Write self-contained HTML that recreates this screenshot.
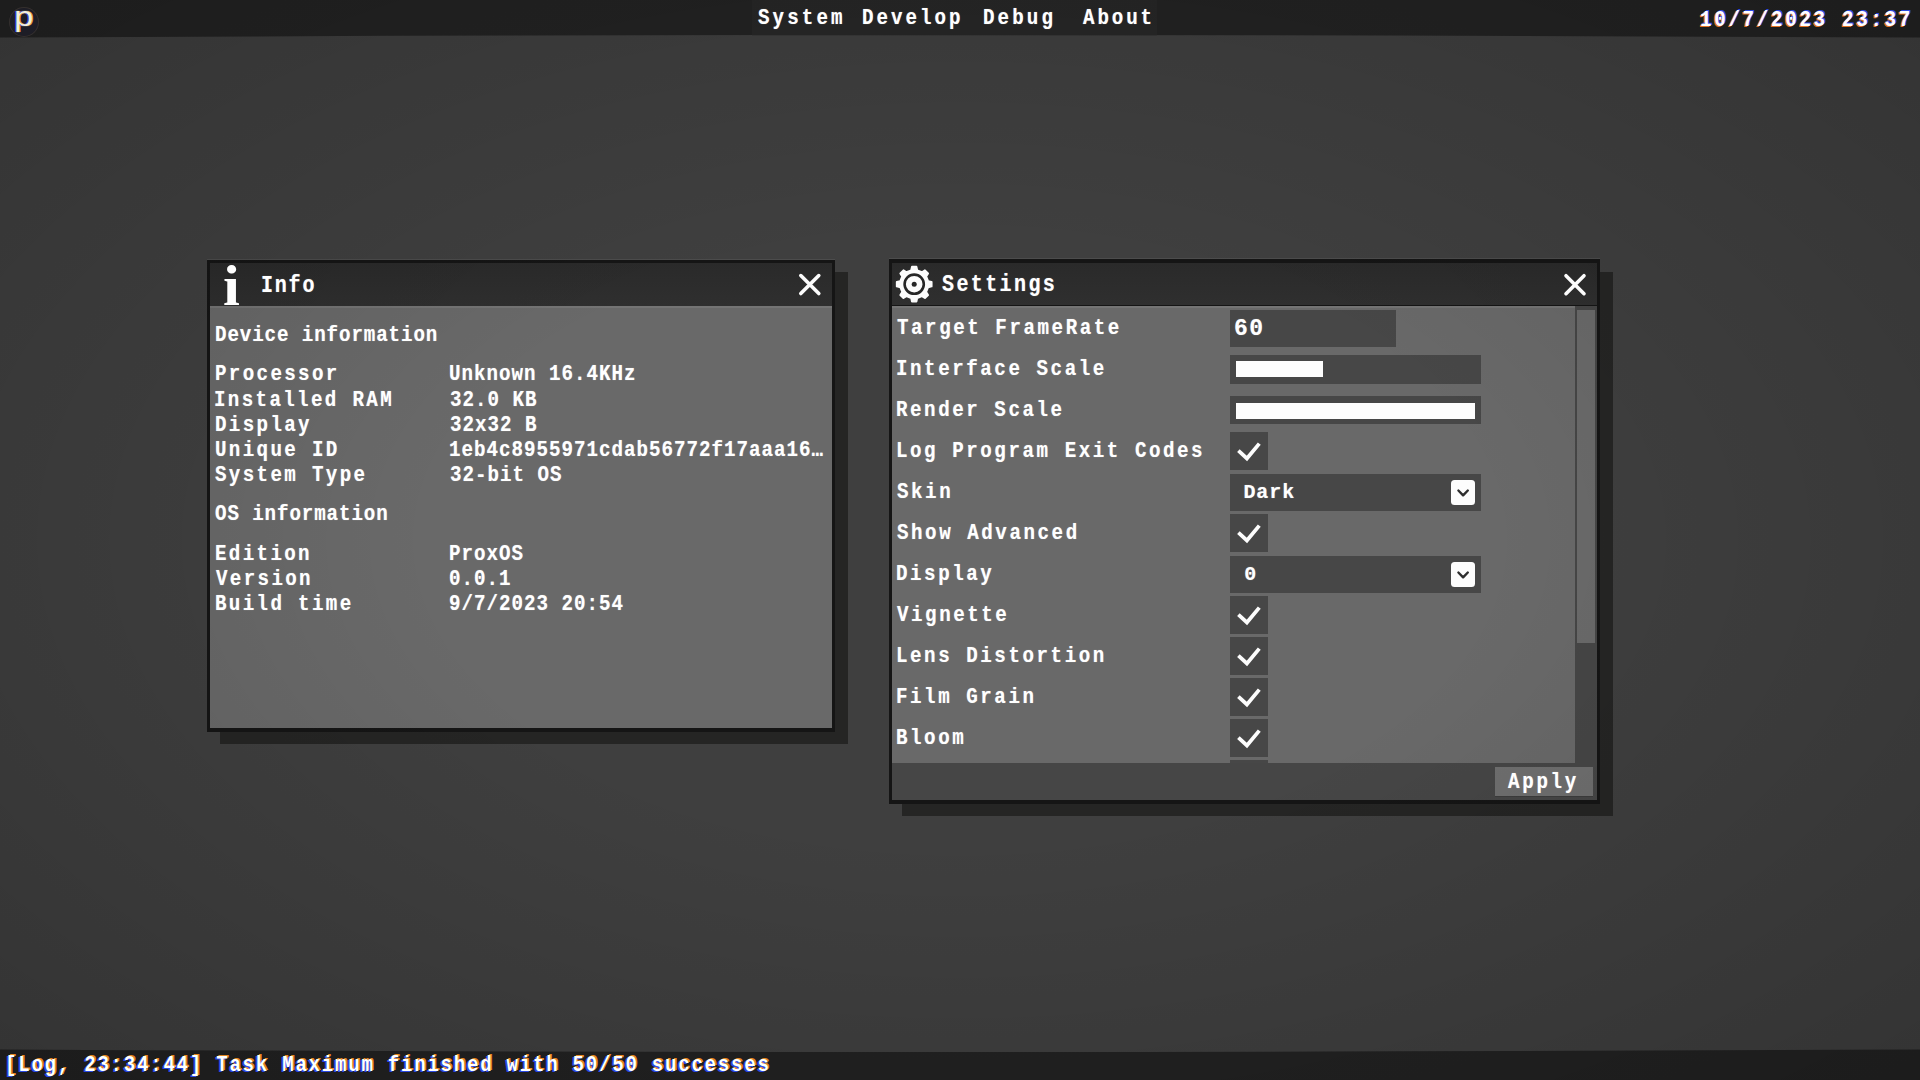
<!DOCTYPE html>
<html lang="en">
<head>
<meta charset="utf-8">
<title>ProxOS</title>
<style>
*{box-sizing:border-box;margin:0;padding:0}
html,body{width:1920px;height:1080px;overflow:hidden;background:#404040}
body{position:relative;font-family:"Liberation Mono","DejaVu Sans Mono",monospace;font-weight:bold;font-size:22px;color:#fff;line-height:26px;white-space:pre}
.abs{position:absolute}
#desk{left:0;top:0;width:1920px;height:1080px;background:#3f3f3f}
.t{position:absolute;height:26px;line-height:26px;transform:scaleX(0.87);transform-origin:0 0;text-shadow:0 0 1px rgba(255,255,255,.5)}
.ca1{text-shadow:1.7px -.7px 0 rgba(45,80,255,.9),-1.7px .7px 0 rgba(255,125,35,.9)}
.ca2{text-shadow:-1.7px .7px 0 rgba(45,80,255,.9),1.7px -.7px 0 rgba(255,150,35,.9)}
.win{position:absolute;background:#151515;box-shadow:0 -1px 0 #4c4c4c}
.shadow{position:absolute;background:#252524}
.title{position:absolute;left:3.4px;top:3.6px;right:3.4px;height:42.6px;background:linear-gradient(#2a2a2a,#2f2f2f)}
.body{position:absolute;background:#696969}
.ctl{position:absolute;background:#474747}
.fill{position:absolute;background:#fdfdfd}
.ddb{position:absolute;background:#fdfdfd;border-radius:3.5px;width:24px;height:24.6px}
.logo{left:14px;top:1px;font:normal 28.1px/32px "Liberation Sans","DejaVu Sans",sans-serif;letter-spacing:0;color:#f1eddc;transform:scaleX(1.24);transform-origin:0 0;text-shadow:-.8px -.3px 0 #2a35d8,.8px .4px 0 #e8932a,0 0 1px #f1eddc}
.iicon{left:223.4px;top:254.1px;font:bold 56.2px/64px "Liberation Serif","DejaVu Serif",serif;letter-spacing:0;color:#fff;transform:scaleX(1.08);transform-origin:0 0}
svg{position:absolute;overflow:visible}
#vig{left:0;top:0;width:1920px;height:1080px;pointer-events:none;background:radial-gradient(ellipse 72% 72% at 50% 50%,rgba(0,0,0,0) 38%,rgba(0,0,0,.19) 100%)}
</style>
</head>
<body>
<div id="desk" class="abs"></div>

<!-- top + bottom bars (slightly curved by lens distortion) -->
<svg class="abs" style="left:0;top:0" width="1920" height="1080" viewBox="0 0 1920 1080">
  <path d="M0 0H1920V37.6Q960 32.4 0 37.6Z" fill="#232323"/>
  <path d="M752 0H1157V35.2H752Z" fill="#272727"/>
  <path d="M0 1080H1920V1049.4Q960 1054.6 0 1049.4Z" fill="#222222"/>
</svg>

<!-- INFO WINDOW -->
<div class="shadow" style="left:219.6px;top:272px;width:628px;height:471.8px"></div>
<div class="win" id="info" style="left:207px;top:259.6px;width:628px;height:472px">
  <div class="title"></div>
  <div class="body" style="left:3.2px;top:46.6px;right:3.2px;bottom:3.6px;border-top:2px solid #747474"></div>
</div>

<!-- SETTINGS WINDOW -->
<div class="shadow" style="left:902px;top:272px;width:710.6px;height:544px"></div>
<div class="win" id="settings" style="left:889px;top:259px;width:711.2px;height:544.6px">
  <div class="title"></div>
  <div class="body" style="left:3.2px;top:47px;right:3.4px;bottom:3.4px;background:#464646"></div>
  <div class="body" style="left:3.2px;top:47px;width:682.6px;height:457px;border-top:2px solid #747474"></div>
  <div class="body" style="left:688.4px;top:51px;width:17.6px;height:332.6px;background:#6a6a6a"></div>
  <div class="body" style="left:606px;top:508px;width:97.6px;height:29.4px;background:#6f6f6f;box-shadow:0 1px 0 #3c3c3c"></div>
</div>
<div class="ctl" style="left:1229.5px;top:309.9px;width:166.5px;height:37.5px"></div>
<div class="ctl" style="left:1229.5px;top:355.4px;width:251.5px;height:28.5px"></div>
<div class="ctl" style="left:1229.5px;top:396.3px;width:251.5px;height:27.8px"></div>
<div class="ctl" style="left:1229.5px;top:432px;width:38.4px;height:38.4px"></div>
<div class="ctl" style="left:1229.5px;top:514px;width:38.4px;height:38.4px"></div>
<div class="ctl" style="left:1229.5px;top:596px;width:38.4px;height:38.4px"></div>
<div class="ctl" style="left:1229.5px;top:637px;width:38.4px;height:38.4px"></div>
<div class="ctl" style="left:1229.5px;top:678px;width:38.4px;height:38.4px"></div>
<div class="ctl" style="left:1229.5px;top:719px;width:38.4px;height:38.4px"></div>
<div class="ctl" style="left:1229.5px;top:473.9px;width:251.5px;height:37px"></div>
<div class="ctl" style="left:1229.5px;top:555.9px;width:251.5px;height:37px"></div>
<div class="ctl" style="left:1229.5px;top:760px;width:38.4px;height:3.2px"></div>

<!-- vignette (applies to backgrounds; glowing white elements sit above it) -->
<div id="vig" class="abs"></div>

<!-- logo: dark disc + letter -->
<div class="abs" style="left:9px;top:7px;width:30px;height:30px;border-radius:50%;background:#1d1d26;box-shadow:inset 0 0 0 1px #35302d"></div>
<div class="abs logo">p</div>

<!-- info icon -->
<div class="abs iicon">i</div>
<svg style="left:0;top:0" width="1920" height="1080"><path d="M800.8 275.6L818.8 293.6M818.8 275.6L800.8 293.6" stroke="#fcfcfc" stroke-width="3.6" stroke-linecap="round"/></svg>
<svg style="left:0;top:0" width="1920" height="1080"><path d="M911.24 270.31 L912.02 266.84 L916.38 266.84 L917.16 270.31 L921.93 272.29 L924.94 270.38 L928.02 273.46 L926.11 276.47 L928.09 281.24 L931.56 282.02 L931.56 286.38 L928.09 287.16 L926.11 291.93 L928.02 294.94 L924.94 298.02 L921.93 296.11 L917.16 298.09 L916.38 301.56 L912.02 301.56 L911.24 298.09 L906.47 296.11 L903.46 298.02 L900.38 294.94 L902.29 291.93 L900.31 287.16 L896.84 286.38 L896.84 282.02 L900.31 281.24 L902.29 276.47 L900.38 273.46 L903.46 270.38 L906.47 272.29Z" fill="#fcfcfc" stroke="#fcfcfc" stroke-width="2" stroke-linejoin="round"/><circle cx="914.2" cy="284.2" r="9.6" fill="none" stroke="#262626" stroke-width="2.6"/><circle cx="914.2" cy="284.2" r="2.5" fill="#262626"/></svg>
<svg style="left:0;top:0" width="1920" height="1080"><path d="M1566 275.7L1584 293.7M1584 275.7L1566 293.7" stroke="#fcfcfc" stroke-width="3.6" stroke-linecap="round"/></svg>
<div class="fill" style="left:1235.75px;top:361px;width:87.5px;height:16.3px"></div>
<div class="fill" style="left:1235.75px;top:402.5px;width:239.5px;height:16.4px"></div>
<svg style="left:1229.5px;top:432px" width="39" height="39" viewBox="0 0 39 39"><path d="M8.4 18.7L16.9 26.4L29.3 11.6" fill="none" stroke="#fdfdfd" stroke-width="3.8" stroke-linecap="butt" stroke-linejoin="miter"/></svg>
<svg style="left:1229.5px;top:514px" width="39" height="39" viewBox="0 0 39 39"><path d="M8.4 18.7L16.9 26.4L29.3 11.6" fill="none" stroke="#fdfdfd" stroke-width="3.8" stroke-linecap="butt" stroke-linejoin="miter"/></svg>
<svg style="left:1229.5px;top:596px" width="39" height="39" viewBox="0 0 39 39"><path d="M8.4 18.7L16.9 26.4L29.3 11.6" fill="none" stroke="#fdfdfd" stroke-width="3.8" stroke-linecap="butt" stroke-linejoin="miter"/></svg>
<svg style="left:1229.5px;top:637px" width="39" height="39" viewBox="0 0 39 39"><path d="M8.4 18.7L16.9 26.4L29.3 11.6" fill="none" stroke="#fdfdfd" stroke-width="3.8" stroke-linecap="butt" stroke-linejoin="miter"/></svg>
<svg style="left:1229.5px;top:678px" width="39" height="39" viewBox="0 0 39 39"><path d="M8.4 18.7L16.9 26.4L29.3 11.6" fill="none" stroke="#fdfdfd" stroke-width="3.8" stroke-linecap="butt" stroke-linejoin="miter"/></svg>
<svg style="left:1229.5px;top:719px" width="39" height="39" viewBox="0 0 39 39"><path d="M8.4 18.7L16.9 26.4L29.3 11.6" fill="none" stroke="#fdfdfd" stroke-width="3.8" stroke-linecap="butt" stroke-linejoin="miter"/></svg>
<div class="ddb" style="left:1450.5px;top:480.2px"></div><svg style="left:1450.5px;top:480.2px" width="24" height="24.6" viewBox="0 0 24 24.6"><path d="M7.4 10.5L12.1 15.3L16.8 10.5" fill="none" stroke="#2e2e2e" stroke-width="2.4" stroke-linecap="round" stroke-linejoin="round"/></svg>
<div class="ddb" style="left:1450.5px;top:562.1999999999999px"></div><svg style="left:1450.5px;top:562.1999999999999px" width="24" height="24.6" viewBox="0 0 24 24.6"><path d="M7.4 10.5L12.1 15.3L16.8 10.5" fill="none" stroke="#2e2e2e" stroke-width="2.4" stroke-linecap="round" stroke-linejoin="round"/></svg>

<!-- TEXT -->
<div class="t" id="t0" style="left:758.39px;top:6.00px;letter-spacing:3.58px">System</div>
<div class="t" id="t1" style="left:862.49px;top:6.00px;letter-spacing:3.47px">Develop</div>
<div class="t" id="t2" style="left:983.24px;top:6.00px;letter-spacing:3.58px">Debug</div>
<div class="t" id="t3" style="left:1082.70px;top:6.00px;letter-spacing:3.35px">About</div>
<div class="t ca1" id="t4" style="left:1700.11px;top:8.30px;letter-spacing:3.12px">10/7/2023 23:37</div>
<div class="t ca2" id="t5" style="left:5.11px;top:1052.80px;letter-spacing:1.97px">[Log, 23:34:44] Task Maximum finished with 50/50 successes</div>
<div class="t" id="t6" style="left:261.37px;top:272.50px;letter-spacing:2.06px;font-size:23px">Info</div>
<div class="t" id="t7" style="left:214.54px;top:323.20px;letter-spacing:1.05px">Device information</div>
<div class="t" id="t8" style="left:214.53px;top:362.20px;letter-spacing:2.72px">Processor</div>
<div class="t" id="t9" style="left:449.19px;top:362.20px;letter-spacing:1.17px">Unknown 16.4KHz</div>
<div class="t" id="t10" style="left:214.33px;top:387.50px;letter-spacing:2.72px">Installed RAM</div>
<div class="t" id="t11" style="left:449.53px;top:387.50px;letter-spacing:1.17px">32.0 KB</div>
<div class="t" id="t12" style="left:214.54px;top:412.80px;letter-spacing:2.72px">Display</div>
<div class="t" id="t13" style="left:449.53px;top:412.80px;letter-spacing:1.17px">32x32 B</div>
<div class="t" id="t14" style="left:214.59px;top:438.10px;letter-spacing:2.72px">Unique ID</div>
<div class="t" id="t15" style="left:449.11px;top:438.10px;letter-spacing:1.17px">1eb4c8955971cdab56772f17aaa16…</div>
<div class="t" id="t16" style="left:215.44px;top:463.40px;letter-spacing:2.72px">System Type</div>
<div class="t" id="t17" style="left:449.53px;top:463.40px;letter-spacing:1.17px">32-bit OS</div>
<div class="t" id="t18" style="left:214.63px;top:502.00px;letter-spacing:1.05px">OS information</div>
<div class="t" id="t19" style="left:214.52px;top:541.50px;letter-spacing:2.72px">Edition</div>
<div class="t" id="t20" style="left:449.13px;top:541.50px;letter-spacing:1.17px">ProxOS</div>
<div class="t" id="t21" style="left:215.77px;top:566.70px;letter-spacing:2.72px">Version</div>
<div class="t" id="t22" style="left:449.31px;top:566.70px;letter-spacing:1.17px">0.0.1</div>
<div class="t" id="t23" style="left:214.52px;top:591.90px;letter-spacing:2.72px">Build time</div>
<div class="t" id="t24" style="left:449.33px;top:591.90px;letter-spacing:1.17px">9/7/2023 20:54</div>
<div class="t" id="t25" style="left:941.63px;top:272.00px;letter-spacing:2.75px;font-size:23px">Settings</div>
<div class="t" id="t26" style="left:896.93px;top:316.30px;letter-spacing:2.95px">Target FrameRate</div>
<div class="t" id="t27" style="left:896.03px;top:357.30px;letter-spacing:2.95px">Interface Scale</div>
<div class="t" id="t28" style="left:896.22px;top:398.30px;letter-spacing:2.95px">Render Scale</div>
<div class="t" id="t29" style="left:895.53px;top:439.30px;letter-spacing:2.95px">Log Program Exit Codes</div>
<div class="t" id="t30" style="left:897.14px;top:480.30px;letter-spacing:2.95px">Skin</div>
<div class="t" id="t31" style="left:897.14px;top:521.30px;letter-spacing:2.95px">Show Advanced</div>
<div class="t" id="t32" style="left:896.24px;top:562.30px;letter-spacing:2.95px">Display</div>
<div class="t" id="t33" style="left:897.47px;top:603.30px;letter-spacing:2.95px">Vignette</div>
<div class="t" id="t34" style="left:895.53px;top:644.30px;letter-spacing:2.95px">Lens Distortion</div>
<div class="t" id="t35" style="left:895.94px;top:685.30px;letter-spacing:2.95px">Film Grain</div>
<div class="t" id="t36" style="left:896.22px;top:726.30px;letter-spacing:2.95px">Bloom</div>
<div class="t" id="t37" style="left:1233.90px;top:315.70px;letter-spacing:1.50px;font-size:23px;transform:scaleX(1.0)">60</div>
<div class="t" id="t38" style="left:1243.48px;top:480.00px;letter-spacing:0.90px;font-size:20px;transform:scaleX(1.0)">Dark</div>
<div class="t" id="t39" style="left:1244.36px;top:562.00px;letter-spacing:0.90px;font-size:20px;transform:scaleX(1.0)">0</div>
<div class="t" id="t40" style="left:1508.30px;top:770.00px;letter-spacing:3.12px">Apply</div>

</body>
</html>
